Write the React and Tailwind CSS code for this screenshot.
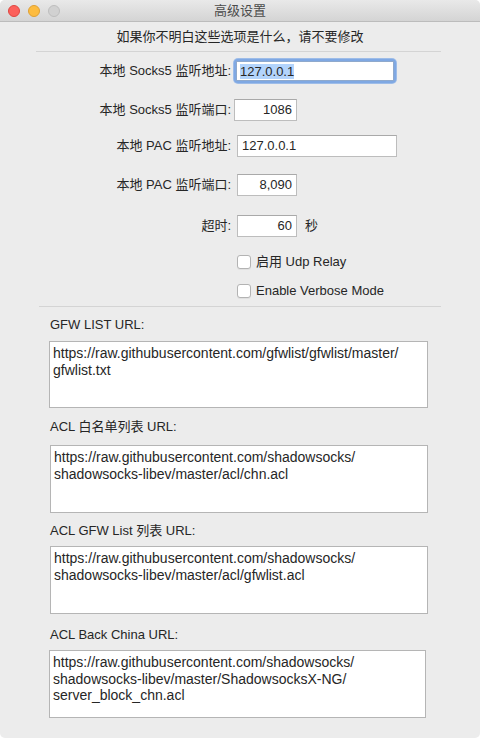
import React from 'react'

const font = {
  fontFamily: '"Liberation Sans", "Noto Sans CJK SC", sans-serif',
}

function Field({ value, width, align = 'left', focused = false }) {
  if (focused) {
    return (
      <div className="rounded-[4px] p-[2px] bg-[#7fa8e3] shadow-[0_0_0_1px_#9dbce8]">
        <div
          className={`${width} h-[20px] bg-white flex items-center px-[3px] border border-[#8fa9cc]`}
        >
          <span className="bg-[#b3d4fc] leading-[15px] text-[13px] text-[#262626]">{value}</span>
        </div>
      </div>
    )
  }
  return (
    <div
      className={`${width} h-[22px] bg-white border border-[#bdbdbd] border-t-[#a9a9a9] flex items-center px-[4px] text-[13px] text-[#262626] ${
        align === 'right' ? 'justify-end' : 'justify-start'
      }`}
    >
      {value}
    </div>
  )
}

function Row({ label, children, className }) {
  return (
    <div className={`flex items-center ${className}`}>
      <div className="w-[231px] text-right text-[13px] text-[#262626] leading-[16px]">{label}</div>
      <div className="ml-[6px] flex items-center">{children}</div>
    </div>
  )
}

function Checkbox({ label, className }) {
  return (
    <div className={`flex items-center pl-[237px] ${className}`}>
      <div className="w-[14px] h-[14px] rounded-[3px] bg-white border border-[#b3b3b3] shadow-[0_1px_0_rgba(0,0,0,0.05)]" />
      <span className="ml-[5px] text-[13px] leading-[16px] text-[#262626]">{label}</span>
    </div>
  )
}

function UrlBox({ lines, className }) {
  return (
    <div
      className={`ml-[49px] w-[379px] h-[67px] bg-white border border-[#b5b5b5] pl-[3px] pt-[3px] text-[14px] leading-[17px] text-[#262626] ${className}`}
    >
      {lines.map((l) => (
        <div key={l}>{l}</div>
      ))}
    </div>
  )
}

function SectionLabel({ children, className }) {
  return (
    <div className={`pl-[50px] h-[16px] text-[13px] leading-[16px] text-[#262626] ${className}`}>
      {children}
    </div>
  )
}

export default function App() {
  return (
    <div className="w-[480px] h-[738px] bg-white" style={font}>
      <div className="w-[480px] h-[738px] rounded-[5px] overflow-hidden bg-[#ececec] flex flex-col">
        <div className="relative h-[22px] shrink-0 bg-gradient-to-b from-[#e9e9e9] to-[#d4d4d4] border-b border-[#bcbcbc] flex items-center justify-center">
          <div className="absolute left-[8px] top-[5px] flex gap-[8px]">
            <div className="w-[12px] h-[12px] rounded-full bg-[#fc605b] border border-[#de4640]" />
            <div className="w-[12px] h-[12px] rounded-full bg-[#fdbc40] border border-[#dea034]" />
            <div className="w-[12px] h-[12px] rounded-full bg-[#d1d1d1] border border-[#bdbdbd]" />
          </div>
          <span className="text-[13px] text-[#4b4b4b]">高级设置</span>
        </div>

        <div className="mt-[7px] h-[16px] leading-[16px] text-center text-[13px] text-[#262626]">
          如果你不明白这些选项是什么，请不要修改
        </div>
        <div className="mt-[6px] ml-[36px] w-[405px] h-px bg-[#d4d4d4]" />

        <Row label="本地 Socks5 监听地址:" className="mt-[7px]">
          <div className="-ml-[3px]">
            <Field value="127.0.0.1" width="w-[158px]" focused />
          </div>
        </Row>
        <Row label="本地 Socks5 监听端口:" className="mt-[16px]">
          <div className="-ml-[3px]">
            <Field value="1086" width="w-[63px]" align="right" />
          </div>
        </Row>
        <Row label="本地 PAC 监听地址:" className="mt-[14px]">
          <Field value="127.0.0.1" width="w-[160px]" />
        </Row>
        <Row label="本地 PAC 监听端口:" className="mt-[17px]">
          <Field value="8,090" width="w-[60px]" align="right" />
        </Row>
        <Row label="超时:" className="mt-[19px]">
          <Field value="60" width="w-[60px]" align="right" />
          <span className="ml-[8px] text-[13px] text-[#262626]">秒</span>
        </Row>
        <Checkbox label="启用 Udp Relay" className="mt-[17px]" />
        <Checkbox label="Enable Verbose Mode" className="mt-[13px]" />

        <div className="mt-[7px] ml-[39px] w-[402px] h-px bg-[#d4d4d4]" />

        <SectionLabel className="mt-[10px]">GFW LIST URL:</SectionLabel>
        <UrlBox
          className="mt-[8px]"
          lines={['https://raw.githubusercontent.com/gfwlist/gfwlist/master/', 'gfwlist.txt']}
        />
        <SectionLabel className="mt-[11px]">ACL 白名单列表 URL:</SectionLabel>
        <UrlBox
          className="mt-[10px] !ml-[50px] !w-[378px] !h-[68px]"
          lines={['https://raw.githubusercontent.com/shadowsocks/', 'shadowsocks-libev/master/acl/chn.acl']}
        />
        <SectionLabel className="mt-[10px]">ACL GFW List 列表 URL:</SectionLabel>
        <UrlBox
          className="mt-[7px] !ml-[50px] !w-[378px] !h-[68px]"
          lines={['https://raw.githubusercontent.com/shadowsocks/', 'shadowsocks-libev/master/acl/gfwlist.acl']}
        />
        <SectionLabel className="mt-[13px]">ACL Back China URL:</SectionLabel>
        <UrlBox
          className="mt-[7px] !w-[377px] !h-[68px] !leading-[16.5px]"
          lines={[
            'https://raw.githubusercontent.com/shadowsocks/',
            'shadowsocks-libev/master/ShadowsocksX-NG/',
            'server_block_chn.acl',
          ]}
        />
      </div>
    </div>
  )
}
